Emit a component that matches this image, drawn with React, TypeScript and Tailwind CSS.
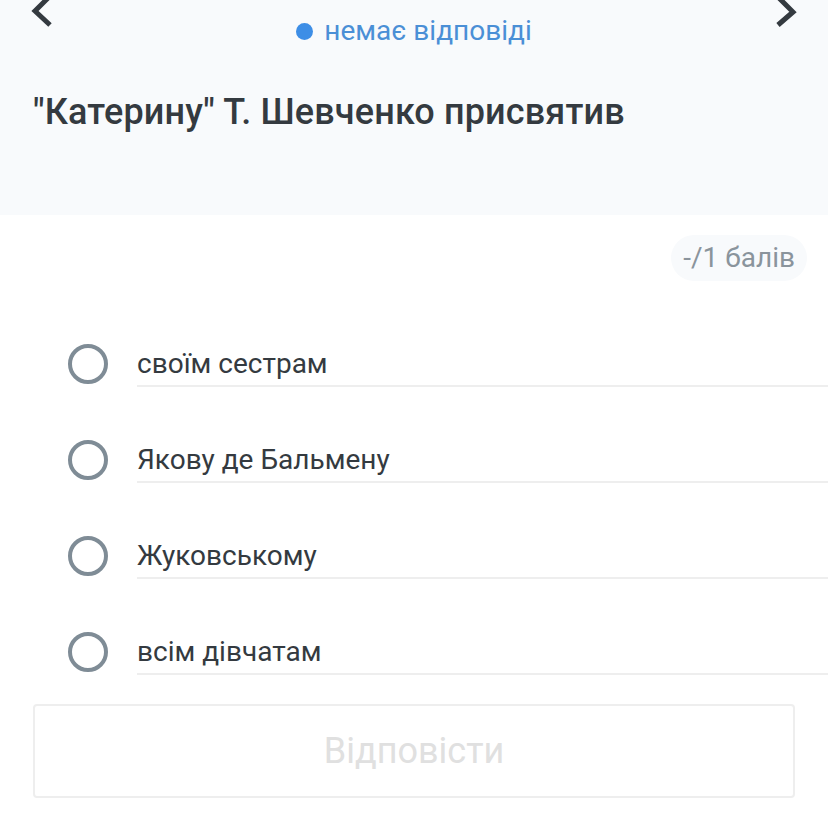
import React from "react";

const options = ["своїм сестрам", "Якову де Бальмену", "Жуковському", "всім дівчатам"];

export default function App() {
  return (
    <div className="w-[828px] h-[828px] overflow-hidden bg-white" style={{ fontFamily: "Roboto, 'Noto Sans', sans-serif" }}>
      <div className="bg-[#f8fafc] h-[215px] flex flex-col">
        <div className="relative h-[48px]">
          <svg className="absolute left-[28px] top-[-8px]" width="32" height="40" viewBox="0 0 32 40">
            <polyline points="22,4 7,19 22,33" fill="none" stroke="#343a40" strokeWidth="5" strokeLinecap="butt" />
          </svg>
          <svg className="absolute left-[770px] top-[-8px]" width="32" height="40" viewBox="0 0 32 40">
            <polyline points="8,5 23,20 8,33" fill="none" stroke="#343a40" strokeWidth="5" strokeLinecap="butt" />
          </svg>
          <div className="flex items-center justify-center gap-[11px] pt-[14px]">
            <span className="w-[17px] h-[17px] rounded-full bg-[#3d8ee6]" />
            <span className="text-[28px] leading-[34px] text-[#4a8fd6]">немає відповіді</span>
          </div>
        </div>
        <div className="px-[33px] pt-[42px] text-[36px] leading-[44px] font-medium text-[#343a40] tracking-[0.15px]">
          "Катерину" Т. Шевченко присвятив
        </div>
      </div>
      <div className="flex justify-end pr-[21px] pt-[20px]">
        <span className="rounded-full bg-[#f8fafc] px-[12px] h-[46px] flex items-center text-[28px] text-[#8a949c]">-/1 балів</span>
      </div>
      <div className="flex flex-col pt-[64px] gap-[54px]">
        {options.map((o) => (
          <div key={o} className="flex h-[42px]">
            <div className="w-[137px] pl-[68px] flex items-start">
              <span className="w-[40px] h-[40px] rounded-full border-[4px] border-[#7f8c96] mt-[-1px]" />
            </div>
            <div className="flex-1 h-[42px] border-b-2 border-[#eeeeee] flex items-start">
              <span className="text-[28px] text-[#343a40] leading-[42px] mt-[-2px]">{o}</span>
            </div>
          </div>
        ))}
      </div>
      <div className="px-[33px] pt-[29px]">
        <div className="w-[762px] h-[94px] border-2 border-[#eeeeee] rounded-[4px] flex items-center justify-center text-[36px] text-[#e0e0e0]">
          Відповісти
        </div>
      </div>
    </div>
  );
}
